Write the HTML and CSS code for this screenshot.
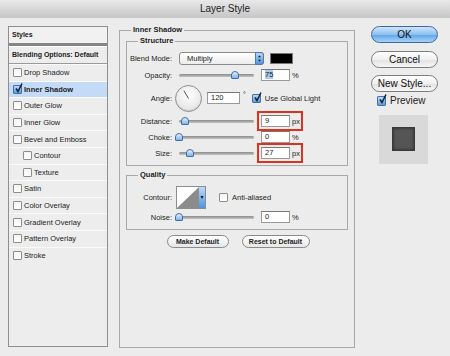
FILE: index.html
```html
<!DOCTYPE html>
<html lang="en">
<head>
    <meta charset="UTF-8">
    <title>Layer Style</title>
    <link rel="stylesheet" href="styles.css">
</head>
<body>
<div class="window">
    <div class="titlebar">Layer Style</div>

    <div class="content">
        <!-- Styles list -->
        <div class="styles-list">
            <div class="list-head">Styles</div>
            <div class="list-blend">Blending Options: Default</div>
            <div class="list-item"><span class="cb"></span>Drop Shadow</div>
            <div class="list-item selected"><span class="cb checked"><svg viewBox="0 0 9 9"><path d="M2 4.5 L4 7.5 L8 -0.5" /></svg></span>Inner Shadow</div>
            <div class="list-item"><span class="cb"></span>Outer Glow</div>
            <div class="list-item"><span class="cb"></span>Inner Glow</div>
            <div class="list-item"><span class="cb"></span>Bevel and Emboss</div>
            <div class="list-item sub"><span class="cb"></span>Contour</div>
            <div class="list-item sub"><span class="cb"></span>Texture</div>
            <div class="list-item"><span class="cb"></span>Satin</div>
            <div class="list-item"><span class="cb"></span>Color Overlay</div>
            <div class="list-item"><span class="cb"></span>Gradient Overlay</div>
            <div class="list-item"><span class="cb"></span>Pattern Overlay</div>
            <div class="list-item"><span class="cb"></span>Stroke</div>
        </div>

        <!-- Inner Shadow settings -->
        <div class="group main">
            <div class="group-title">Inner Shadow</div>

            <div class="group structure">
                <div class="group-title">Structure</div>

                <div class="field f-blend">
                    <span class="field-label">Blend Mode:</span>
                    <span class="popup">Multiply<span class="stepper"><svg viewBox="0 0 9 13"><path d="M4.5 2.5 L6.5 5 L2.5 5 Z M4.5 10.5 L6.5 8 L2.5 8 Z" /></svg></span></span>
                    <span class="swatch"></span>
                </div>

                <div class="field f-opacity">
                    <span class="field-label">Opacity:</span>
                    <span class="slider"><span class="thumb" style="left: 75%"></span></span>
                    <span class="num"><span class="sel">75</span></span>
                    <span class="unit">%</span>
                </div>

                <div class="field f-angle">
                    <span class="field-label">Angle:</span>
                    <span class="dial"><svg viewBox="0 0 27 27"><line x1="13.5" y1="13.5" x2="8.5" y2="5" /></svg></span>
                    <span class="num wide">120</span>
                    <span class="deg">°</span>
                    <span class="cb checked"><svg viewBox="0 0 9 9"><path d="M2 4.5 L4 7.5 L8 -0.5" /></svg></span>
                    <span class="cb-text">Use Global Light</span>
                </div>

                <div class="field">
                    <span class="field-label">Distance:</span>
                    <span class="slider"><span class="thumb" style="left: 8%"></span></span>
                    <span class="mark"><span class="num">9</span><span class="unit">px</span></span>
                </div>

                <div class="field">
                    <span class="field-label">Choke:</span>
                    <span class="slider"><span class="thumb" style="left: 0%"></span></span>
                    <span class="num">0</span>
                    <span class="unit">%</span>
                </div>

                <div class="field">
                    <span class="field-label">Size:</span>
                    <span class="slider"><span class="thumb" style="left: 14%"></span></span>
                    <span class="mark"><span class="num">27</span><span class="unit">px</span></span>
                </div>
            </div>

            <div class="group quality">
                <div class="group-title">Quality</div>

                <div class="field f-contour">
                    <span class="field-label">Contour:</span>
                    <span class="contour">
                        <svg class="curve" viewBox="0 0 22 21"><rect width="22" height="21" fill="#fff" /><path d="M0 21 L22 0 L22 21 Z" fill="#8c8c8c" /></svg>
                        <span class="contour-drop"><svg viewBox="0 0 6 21"><path d="M1.5 9 L4.5 9 L3 12 Z" /></svg></span>
                    </span>
                    <span class="cb"></span>
                    <span class="cb-text">Anti-aliased</span>
                </div>

                <div class="field f-noise">
                    <span class="field-label">Noise:</span>
                    <span class="slider"><span class="thumb" style="left: 0%"></span></span>
                    <span class="num">0</span>
                    <span class="unit">%</span>
                </div>
            </div>

            <div class="defaults">
                <span class="small-btn">Make Default</span>
                <span class="small-btn reset">Reset to Default</span>
            </div>
        </div>

        <!-- Dialog buttons -->
        <div class="side">
            <span class="aqua default">OK</span>
            <span class="aqua">Cancel</span>
            <span class="aqua">New Style...</span>
            <div class="preview-check">
                <span class="cb big checked"><svg viewBox="0 0 9 9"><path d="M2 4.5 L4 7.5 L8 -0.5" /></svg></span>
                Preview
            </div>
            <div class="preview">
                <div class="preview-swatch"></div>
            </div>
        </div>
    </div>
</div>
</body>
</html>
```

FILE: styles.css
```css
body {
    margin: 0;
    background-color: #ececec;
    font-family: "Liberation Sans", Arial, sans-serif;
    font-size: 7.5px;
    color: #1c1c1c;
}

.window {
    width: 450px;
    height: 356px;
    overflow: hidden;
}

.titlebar {
    height: 18px;
    line-height: 18px;
    text-align: center;
    font-size: 10px;
    color: #222;
    background: linear-gradient(#e8e8e8, #c6c6c6);
}

.content {
    display: flex;
    align-items: flex-start;
    padding: 8px 0 0 8px;
}

/* Styles list */
.styles-list {
    box-sizing: border-box;
    width: 100px;
    height: 321px;
    border: 1px solid #8f8f8f;
    background-color: #ededed;
}

.list-head {
    height: 16px;
    line-height: 16px;
    padding-left: 3px;
    font-weight: bold;
    font-size: 7px;
    background-color: #f1f1f1;
    border-bottom: 3px solid #858585;
}

.list-blend {
    height: 16px;
    line-height: 16px;
    padding-left: 3px;
    font-weight: bold;
    font-size: 7px;
    border-top: 1px solid #fff;
    border-bottom: 1px solid #9a9a9a;
}

.list-item {
    display: flex;
    align-items: center;
    height: 15.6px;
    padding-left: 4px;
    border-top: 1px solid #fafafa;
}

.list-item.sub {
    padding-left: 14px;
}

.list-item.selected {
    background-color: #c3dbf7;
    font-weight: bold;
}

.list-item .cb {
    margin-right: 2px;
}

/* Checkboxes */
.cb {
    box-sizing: border-box;
    display: inline-block;
    flex: none;
    width: 9px;
    height: 9px;
    border: 1px solid #8d8d8d;
    border-radius: 1px;
    background: linear-gradient(#f4f4f4, #ffffff);
    position: relative;
}

.cb.checked {
    background: linear-gradient(#b9d8f6, #5b9de0);
    border-color: #4a6f9e;
}

.cb svg {
    position: absolute;
    left: 0;
    top: -2px;
    width: 9px;
    height: 9px;
    overflow: visible;
}

.cb svg path {
    fill: none;
    stroke: #10223c;
    stroke-width: 1.5;
}

/* Groups */
.group {
    box-sizing: border-box;
    border: 1px solid #a9a9a9;
}

.group-title {
    width: fit-content;
    height: 10px;
    line-height: 10px;
    margin-top: -6px;
    padding: 0 2px;
    font-weight: bold;
    background-color: #ececec;
}

.main {
    width: 236px;
    height: 318px;
    margin: 4px 0 0 11px;
    padding: 0 6px;
}

.main > .group-title {
    margin-left: 5px;
}

.structure {
    margin-top: 6px;
    padding: 0 0 4px 0;
}

.structure > .group-title,
.quality > .group-title {
    margin-left: 11px;
}

.quality {
    margin-top: 9px;
    padding-bottom: 5px;
}

/* Rows */
.field {
    display: flex;
    align-items: center;
    height: 16px;
}

.field-label {
    flex: none;
    width: 45px;
    text-align: right;
    margin-right: 7px;
}

.f-blend {
    height: 18px;
    margin-top: 3px;
}

.f-angle {
    height: 30px;
}

.f-contour {
    height: 26px;
    margin-top: 4px;
}

.f-noise {
    height: 14px;
}

.popup {
    box-sizing: border-box;
    position: relative;
    width: 85px;
    height: 13px;
    line-height: 11px;
    padding-left: 7px;
    border: 1px solid #8c8c8c;
    border-radius: 3px;
    background: linear-gradient(#ffffff, #ececec);
}

.stepper {
    position: absolute;
    right: -1px;
    top: -1px;
    width: 9px;
    height: 13px;
    border-radius: 0 3px 3px 0;
    background: linear-gradient(#b6d6f6, #4f94df);
    border: 1px solid #54799f;
    box-sizing: border-box;
}

.stepper svg {
    display: block;
    width: 7px;
    height: 11px;
}

.stepper path {
    fill: #111;
}

.swatch {
    width: 23px;
    height: 11px;
    margin-left: 6px;
    background-color: #000;
    border: 1px solid #777;
    box-sizing: border-box;
}

.slider {
    position: relative;
    flex: none;
    width: 75px;
    height: 3px;
    border-radius: 2px;
    background: linear-gradient(#8a8a8a, #c4c4c4);
    margin-right: 7px;
}

.thumb {
    position: absolute;
    top: -3px;
    width: 8px;
    height: 8px;
    margin-left: -4px;
    box-sizing: border-box;
    border: 1px solid #3e6fa5;
    border-radius: 4px 4px 1px 1px;
    background: linear-gradient(#e6f1fc, #7fb3ea);
}

.num {
    box-sizing: border-box;
    display: inline-block;
    flex: none;
    width: 29px;
    height: 12px;
    line-height: 10px;
    padding-left: 3px;
    background-color: #fff;
    border: 1px solid #9a9a9a;
    border-top-color: #777;
}

.num.wide {
    width: 33px;
    margin-left: 5px;
}

.sel {
    background-color: #a9caf2;
}

.unit {
    margin-left: 2px;
}

.deg {
    align-self: flex-start;
    margin: 8px 0 0 3px;
    font-size: 7px;
}

.f-angle .cb {
    margin-left: 6px;
}

.cb-text {
    margin-left: 4px;
}

.mark {
    display: flex;
    align-items: center;
    outline: 2px solid #e0301e;
    outline-offset: 2px;
    width: 38px;
}

.dial {
    width: 27px;
    height: 27px;
    margin-left: -4px;
    box-sizing: border-box;
    border: 1px solid #8e8e8e;
    border-radius: 50%;
    background: radial-gradient(circle at 50% 35%, #ffffff, #dcdcdc);
    box-shadow: inset 0 -1px 1px rgba(0, 0, 0, 0.1);
}

.dial svg {
    display: block;
    width: 25px;
    height: 25px;
}

.dial line {
    stroke: #444;
    stroke-width: 1;
}

.contour {
    display: flex;
    margin-left: -3px;
    border: 1px solid #8d8d8d;
    height: 23px;
    box-sizing: border-box;
}

.contour .curve {
    display: block;
    width: 22px;
    height: 21px;
}

.contour-drop {
    width: 6px;
    height: 21px;
    background: linear-gradient(#bcdaf7, #4f94df);
}

.contour-drop svg {
    display: block;
    width: 6px;
    height: 21px;
}

.contour-drop path {
    fill: #111;
}

.f-contour .cb {
    margin-left: 13px;
}

/* Make Default / Reset */
.defaults {
    display: flex;
    justify-content: center;
    gap: 13px;
    margin-top: 5px;
    padding-left: 2px;
}

.small-btn {
    box-sizing: border-box;
    width: 62px;
    height: 13px;
    line-height: 11px;
    text-align: center;
    font-size: 7px;
    font-weight: bold;
    border: 1px solid #8a8a8a;
    border-radius: 7px;
    background: linear-gradient(#ffffff, #e6e6e6);
}

.small-btn.reset {
    width: 68px;
}

/* Right column */
.side {
    display: flex;
    flex-direction: column;
    margin-left: 16px;
    width: 67px;
}

.aqua {
    box-sizing: border-box;
    height: 17px;
    line-height: 15px;
    margin-bottom: 7.5px;
    text-align: center;
    font-size: 10px;
    color: #111;
    border: 1px solid #7c7c7c;
    border-radius: 9px;
    background: linear-gradient(#ffffff, #f0f0f0 50%, #e2e2e2 51%, #f6f6f6);
}

.aqua.default {
    border-color: #3f6b9c;
    background: linear-gradient(#cfe5fb, #8ec0f0 50%, #5ea3e8 51%, #a6d2f8);
}

.preview-check {
    display: flex;
    align-items: center;
    gap: 4px;
    margin: -4px 0 0 6px;
    height: 10px;
    font-size: 10px;
}

.cb.big {
    width: 9px;
    height: 10px;
}

.preview {
    display: flex;
    align-items: center;
    justify-content: center;
    width: 49px;
    height: 49px;
    margin: 9px 0 0 8px;
    background-color: #d9d9d9;
}

.preview-swatch {
    box-sizing: border-box;
    width: 23px;
    height: 24px;
    background-color: #555;
    border: 1px solid #3a3a3a;
    box-shadow: inset 0 0 3px #222;
}
```
